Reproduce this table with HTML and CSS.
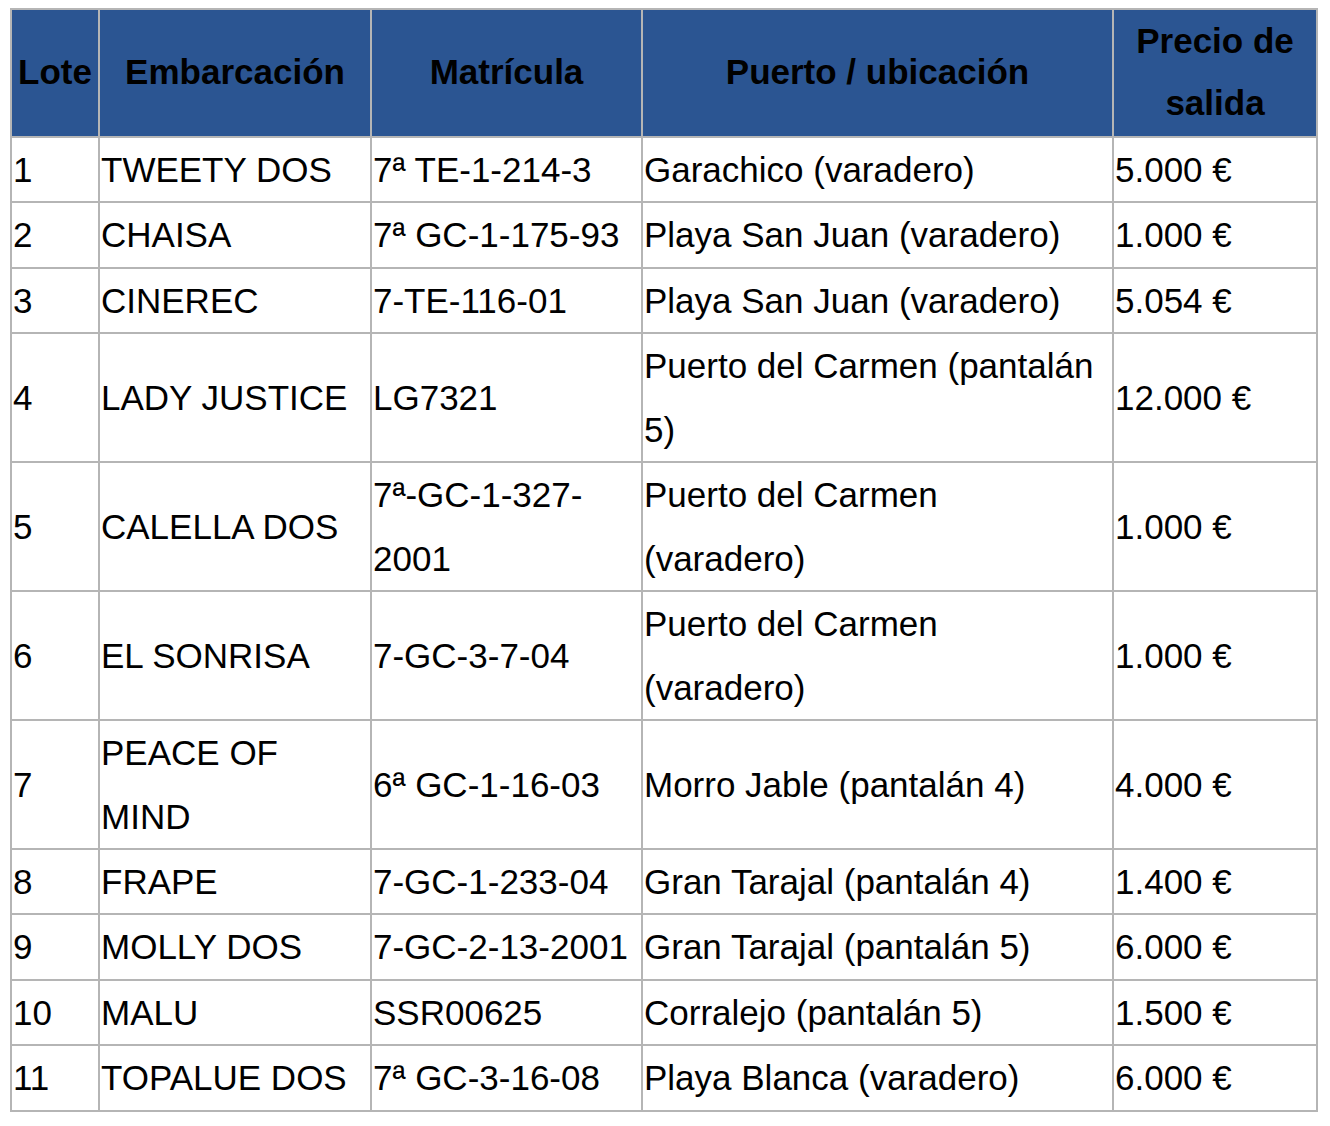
FILE: index.html
```html
<!DOCTYPE html>
<html lang="es">
<head>
<meta charset="utf-8">
<title>Lotes</title>
<link rel="stylesheet" href="styles.css">
</head>
<body>
<table class="lots">
  <colgroup>
    <col class="c-lote">
    <col class="c-emb">
    <col class="c-mat">
    <col class="c-pue">
    <col class="c-pre">
  </colgroup>
  <thead>
    <tr>
      <th>Lote</th>
      <th>Embarcación</th>
      <th>Matrícula</th>
      <th>Puerto / ubicación</th>
      <th>Precio de salida</th>
    </tr>
  </thead>
  <tbody>
    <tr><td>1</td><td>TWEETY DOS</td><td>7ª TE-1-214-3</td><td>Garachico (varadero)</td><td>5.000 €</td></tr>
    <tr><td>2</td><td>CHAISA</td><td>7ª GC-1-175-93</td><td>Playa San Juan (varadero)</td><td>1.000 €</td></tr>
    <tr><td>3</td><td>CINEREC</td><td>7-TE-116-01</td><td>Playa San Juan (varadero)</td><td>5.054 €</td></tr>
    <tr><td>4</td><td>LADY JUSTICE</td><td>LG7321</td><td>Puerto del Carmen (pantalán 5)</td><td>12.000 €</td></tr>
    <tr><td>5</td><td>CALELLA DOS</td><td>7ª-GC-1-327-2001</td><td>Puerto del Carmen (varadero)</td><td>1.000 €</td></tr>
    <tr><td>6</td><td>EL SONRISA</td><td>7-GC-3-7-04</td><td>Puerto del Carmen (varadero)</td><td>1.000 €</td></tr>
    <tr><td>7</td><td>PEACE OF MIND</td><td>6ª GC-1-16-03</td><td>Morro Jable (pantalán 4)</td><td>4.000 €</td></tr>
    <tr><td>8</td><td>FRAPE</td><td>7-GC-1-233-04</td><td>Gran Tarajal (pantalán 4)</td><td>1.400 €</td></tr>
    <tr><td>9</td><td>MOLLY DOS</td><td>7-GC-2-13-2001</td><td>Gran Tarajal (pantalán 5)</td><td>6.000 €</td></tr>
    <tr><td>10</td><td>MALU</td><td>SSR00625</td><td>Corralejo (pantalán 5)</td><td>1.500 €</td></tr>
    <tr><td>11</td><td>TOPALUE DOS</td><td>7ª GC-3-16-08</td><td>Playa Blanca (varadero)</td><td>6.000 €</td></tr>
  </tbody>
</table>
</body>
</html>
```
FILE: styles.css
```css
html, body {
  margin: 0;
  padding: 0;
  background: #ffffff;
}

body {
  padding: 8px 0 0 10px;
  font-family: "Liberation Sans", Arial, Helvetica, sans-serif;
  color: #000000;
}

.lots {
  border-collapse: collapse;
  table-layout: fixed;
  width: 1306px;
  font-size: 35px;
  line-height: 63.45px;
}

.c-lote { width: 88px; }
.c-emb { width: 272px; }
.c-mat { width: 271px; }
.c-pue { width: 471px; }
.c-pre { width: 204px; }

.lots th,
.lots td {
  border: 2px solid #b5b5b5;
  padding: 0 8px 0 1px;
  vertical-align: middle;
}

.lots th {
  background: #2b5592;
  font-weight: bold;
  text-align: center;
  line-height: 62px;
  padding: 0 1px 2px;
}

.lots td {
  text-align: left;
}
```
